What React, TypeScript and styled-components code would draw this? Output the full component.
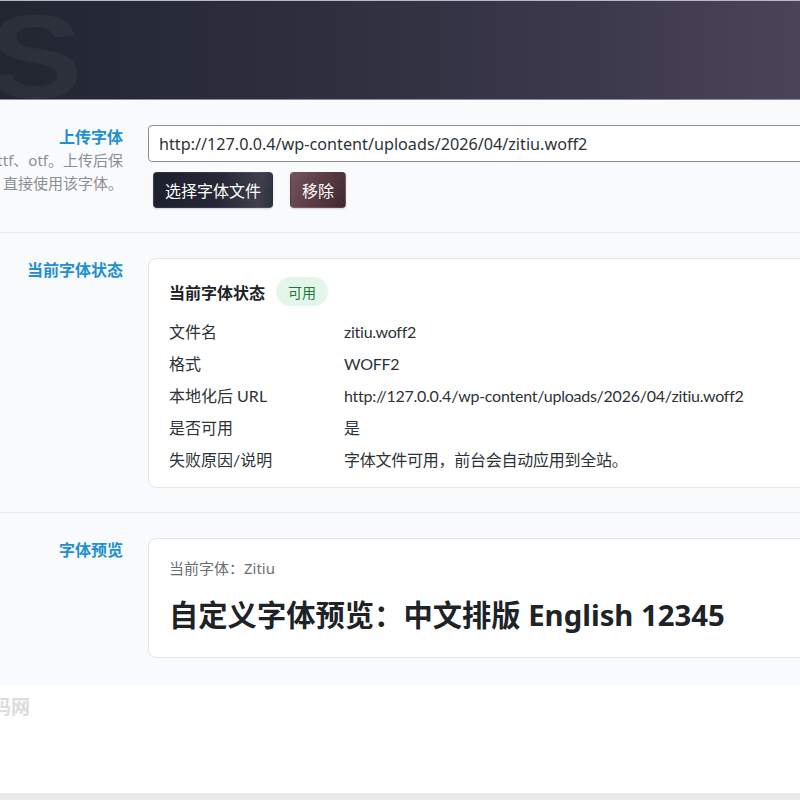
import React from "react";
import styled, { createGlobalStyle } from "styled-components";

const GlobalStyle = createGlobalStyle`
  html, body {
    margin: 0;
    padding: 0;
    background: #ffffff;
    overflow: hidden;
  }
  body {
    font-family: "Noto Sans", "Noto Sans CJK SC", sans-serif;
    color: #2c3338;
  }
`;

const Header = styled.header`
  position: relative;
  height: 98px;
  border-top: 1px solid #b9b9c6;
  border-bottom: 1px solid #8e8c9c;
  background: linear-gradient(90deg, #222631 0%, #2f3040 45%, #3d394d 75%, #4a4459 100%);
  overflow: hidden;
`;

const HeaderMark = styled.span`
  position: absolute;
  left: -12px;
  top: 12px;
  font-family: "Liberation Sans", sans-serif;
  font-size: 118px;
  font-weight: 700;
  line-height: 0.75;
  color: rgba(255, 255, 255, 0.045);
  transform: scaleX(1.2);
  transform-origin: left top;
`;

const Main = styled.main`
  background: #f8fafc;
`;

const Form = styled.div`
  width: 1100px;
  margin-left: -100px;
`;

const Section = styled.section<{ $last?: boolean }>`
  display: grid;
  grid-template-columns: 223px 1fr;
  column-gap: 25px;
  padding: 25px 0 ${(p) => (p.$last ? "27px" : "24px")};
  border-bottom: ${(p) => (p.$last ? "none" : "1px solid #e6e8eb")};
`;

const LabelCol = styled.div`
  text-align: right;
`;

const Label = styled.div`
  font-size: 16px;
  line-height: 24px;
  font-weight: 700;
  color: #2190d0;
`;

const Description = styled.p`
  margin: 0;
  font-size: 15px;
  line-height: 23px;
  color: #8c8f94;
  white-space: nowrap;
`;

const Field = styled.div`
  display: flex;
  flex-direction: column;
`;

const UrlInput = styled.input`
  box-sizing: border-box;
  width: 900px;
  height: 37px;
  padding: 0 10px;
  border: 1px solid #8c8f94;
  border-radius: 4px;
  background: #ffffff;
  font-family: inherit;
  font-size: 16.2px;
  color: #2c3338;
  outline: none;
`;

const ButtonRow = styled.div`
  display: flex;
  gap: 17px;
  margin-top: 10px;
  padding-left: 5px;
`;

const ActionButton = styled.button<{ $tone: "dark" | "danger" }>`
  height: 36px;
  padding: 0 11px;
  border: 1px solid rgba(255, 255, 255, 0.08);
  border-radius: 4px;
  font-family: inherit;
  font-size: 16px;
  color: #ffffff;
  cursor: pointer;
  background: ${(p) =>
    p.$tone === "dark"
      ? "linear-gradient(100deg, #1c1f2c 0%, #262837 55%, #3f404e 88%, #2f303e 100%)"
      : "linear-gradient(120deg, #74545c 0%, #5a3c44 50%, #3e2a31 100%)"};
  box-shadow: 0 1px 2px rgba(0, 0, 0, 0.15);
`;

const Card = styled.div<{ $pad: string }>`
  width: 900px;
  box-sizing: border-box;
  padding: ${(p) => p.$pad};
  background: #ffffff;
  border: 1px solid #e3e5e8;
  border-radius: 8px;
`;

const CardHeader = styled.div`
  display: flex;
  align-items: center;
  gap: 11px;
  height: 29px;
  margin-bottom: 9px;
`;

const CardTitle = styled.span`
  font-size: 16px;
  font-weight: 700;
  color: #1d2327;
`;

const Badge = styled.span`
  display: inline-flex;
  align-items: center;
  height: 29px;
  padding: 0 12px;
  border-radius: 15px;
  background: #e4f5ea;
  color: #1f7a3e;
  font-size: 14px;
`;

const InfoGrid = styled.dl`
  display: grid;
  grid-template-columns: 175px 1fr;
  grid-auto-rows: 32px;
  margin: 0;
  align-items: center;
  font-family: "Lato", "Noto Sans CJK SC", sans-serif;
  font-size: 16px;
  color: #2c3338;
`;

const InfoKey = styled.dt`
  margin: 0;
`;

const InfoValue = styled.dd`
  margin: 0;
  letter-spacing: -0.25px;
`;

const CurrentFont = styled.div`
  font-size: 15px;
  line-height: 24px;
  color: #6b6f75;
`;

const PreviewText = styled.div`
  margin-top: 15px;
  font-size: 29.3px;
  line-height: 40px;
  font-weight: 700;
  color: #1d2327;
`;

const Footer = styled.footer`
  position: relative;
  height: 108px;
  background: #ffffff;
  overflow: hidden;
`;

const Watermark = styled.span`
  position: absolute;
  left: -27px;
  top: 7px;
  font-size: 19px;
  font-weight: 700;
  color: #dcdcdc;
`;

const BottomBar = styled.div`
  height: 7px;
  background: #e9e9ea;
`;

const rows: [string, string][] = [
  ["文件名", "zitiu.woff2"],
  ["格式", "WOFF2"],
  ["本地化后 URL", "http://127.0.0.4/wp-content/uploads/2026/04/zitiu.woff2"],
  ["是否可用", "是"],
  ["失败原因/说明", "字体文件可用，前台会自动应用到全站。"],
];

export default function App() {
  return (
    <>
      <GlobalStyle />
      <Header>
        <HeaderMark>S</HeaderMark>
      </Header>
      <Main>
        <Form>
          <Section>
            <LabelCol>
              <Label>上传字体</Label>
              <Description>支持 woff、ttf、otf。上传后保</Description>
              <Description>存设置后，直接使用该字体。</Description>
            </LabelCol>
            <Field>
              <UrlInput
                readOnly
                value="http://127.0.0.4/wp-content/uploads/2026/04/zitiu.woff2"
              />
              <ButtonRow>
                <ActionButton $tone="dark">选择字体文件</ActionButton>
                <ActionButton $tone="danger">移除</ActionButton>
              </ButtonRow>
            </Field>
          </Section>

          <Section>
            <LabelCol>
              <Label>当前字体状态</Label>
            </LabelCol>
            <Card $pad="18px 20px 12px">
              <CardHeader>
                <CardTitle>当前字体状态</CardTitle>
                <Badge>可用</Badge>
              </CardHeader>
              <InfoGrid>
                {rows.map(([k, v]) => (
                  <React.Fragment key={k}>
                    <InfoKey>{k}</InfoKey>
                    <InfoValue>{v}</InfoValue>
                  </React.Fragment>
                ))}
              </InfoGrid>
            </Card>
          </Section>

          <Section $last>
            <LabelCol>
              <Label>字体预览</Label>
            </LabelCol>
            <Card $pad="17px 20px 22px">
              <CurrentFont>当前字体：Zitiu</CurrentFont>
              <PreviewText>自定义字体预览：中文排版 English 12345</PreviewText>
            </Card>
          </Section>
        </Form>
      </Main>
      <Footer>
        <Watermark>源码网</Watermark>
      </Footer>
      <BottomBar />
    </>
  );
}
